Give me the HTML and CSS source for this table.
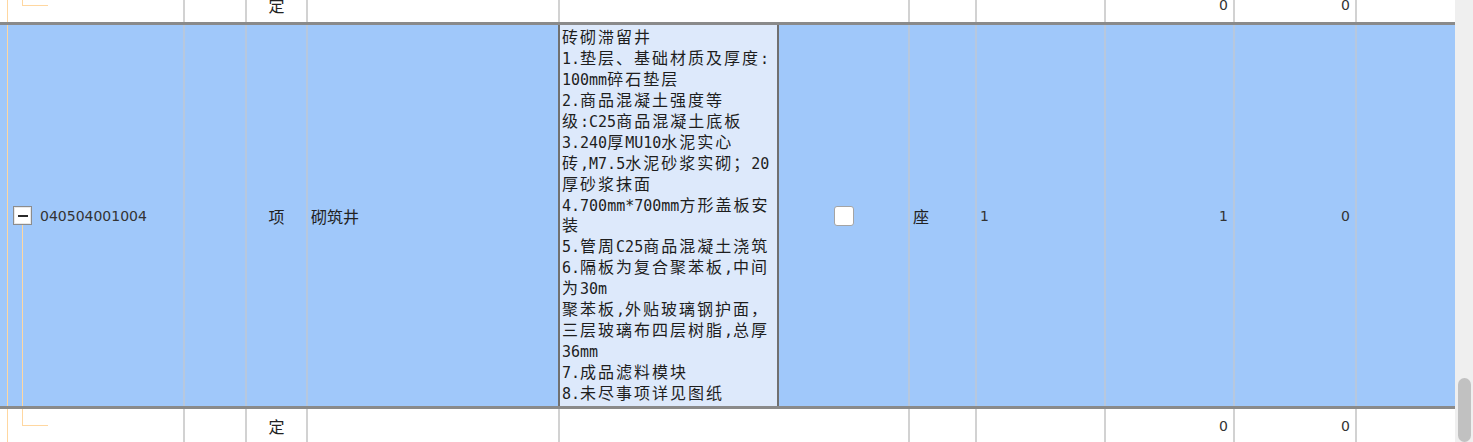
FILE: index.html
```html
<!DOCTYPE html>
<html lang="zh-CN">
<head>
<meta charset="utf-8">
<title>清单</title>
<link rel="stylesheet" href="styles.css">
</head>
<body>
<div class="page">
  <div class="table">
    <div class="rows">
      <div class="row row-white row-first">
        <div class="cell c-tree tree-end"></div>
        <div class="cell"></div>
        <div class="cell center cjk">定</div>
        <div class="cell"></div>
        <div class="cell"></div>
        <div class="cell no-left"></div>
        <div class="cell"></div>
        <div class="cell"></div>
        <div class="cell num">0</div>
        <div class="cell num">0</div>
        <div class="cell"></div>
      </div>

      <div class="row row-sel">
        <div class="cell c-tree tree-open">
          <span class="toggle"><span class="minus"></span></span>
          <span class="code">040504001004</span>
        </div>
        <div class="cell"></div>
        <div class="cell center cjk">项</div>
        <div class="cell cjk pad">砌筑井</div>
        <div class="cell editor">
          <div class="edit-text">
            <div class="ln">砖砌滞留井</div>
            <div class="ln"><span class="l">1.</span>垫层、基础材质及厚度<span class="l">:</span></div>
            <div class="ln"><span class="l">100mm</span>碎石垫层</div>
            <div class="ln"><span class="l">2.</span>商品混凝土强度等</div>
            <div class="ln">级<span class="l">:C25</span>商品混凝土底板</div>
            <div class="ln"><span class="l">3.240</span>厚<span class="l">MU10</span>水泥实心</div>
            <div class="ln">砖<span class="l">,M7.5</span>水泥砂浆实砌；<span class="l">20</span></div>
            <div class="ln">厚砂浆抹面</div>
            <div class="ln"><span class="l">4.700mm*700mm</span>方形盖板安</div>
            <div class="ln">装</div>
            <div class="ln"><span class="l">5.</span>管周<span class="l">C25</span>商品混凝土浇筑</div>
            <div class="ln"><span class="l">6.</span>隔板为复合聚苯板<span class="l">,</span>中间</div>
            <div class="ln">为<span class="l">30m</span></div>
            <div class="ln">聚苯板<span class="l">,</span>外贴玻璃钢护面，</div>
            <div class="ln">三层玻璃布四层树脂<span class="l">,</span>总厚</div>
            <div class="ln"><span class="l">36mm</span></div>
            <div class="ln"><span class="l">7.</span>成品滤料模块</div>
            <div class="ln"><span class="l">8.</span>未尽事项详见图纸</div>
          </div>
        </div>
        <div class="cell no-left center"><span class="checkbox"></span></div>
        <div class="cell cjk pad">座</div>
        <div class="cell pad-num">1</div>
        <div class="cell num">1</div>
        <div class="cell num">0</div>
        <div class="cell"></div>
      </div>

      <div class="row row-white row-last">
        <div class="cell c-tree tree-end-bottom"></div>
        <div class="cell"></div>
        <div class="cell center cjk">定</div>
        <div class="cell"></div>
        <div class="cell"></div>
        <div class="cell no-left"></div>
        <div class="cell"></div>
        <div class="cell"></div>
        <div class="cell num">0</div>
        <div class="cell num">0</div>
        <div class="cell"></div>
      </div>
    </div>
  </div>
  <div class="scrollbar"><div class="thumb"></div></div>
</div>
</body>
</html>
```

FILE: styles.css
```css
html, body {
  margin: 0;
  padding: 0;
  background: #ffffff;
}

.page {
  display: flex;
  width: 1473px;
  height: 442px;
  overflow: hidden;
}

.table {
  width: 1455px;
  height: 442px;
  overflow: hidden;
  background: #ffffff;
}

.rows {
  margin-top: -12px;
}

.row {
  display: grid;
  grid-template-columns: 183px 62px 61px 252px 221px 129px 67px 129px 129px 122px 100px;
  font-family: "DejaVu Sans", "Noto Sans CJK SC", sans-serif;
  font-size: 14px;
  color: #333333;
}

.row-first {
  height: 34px;
  border-bottom: 3px solid #8a8a8a;
}

.row-sel {
  height: 381px;
  background: #a0c8fa;
  border-bottom: 3px solid #8a8a8a;
}

.row-last {
  height: 34px;
}

.cell {
  box-sizing: border-box;
  min-width: 0;
  display: flex;
  align-items: center;
  border-left: 2px solid #d2d2d2;
  overflow: hidden;
  white-space: nowrap;
}

.row-sel .cell {
  border-left-color: #b7c8de;
}

.cell.no-left,
.row-sel .cell.no-left {
  border-left: none;
}

.cell.center {
  justify-content: center;
}

.cell.num {
  justify-content: flex-end;
  padding-right: 5px;
}

.cell.pad {
  padding-left: 3px;
}

.cell.pad-num {
  padding-left: 3px;
}

.cjk {
  font-family: "Noto Sans CJK SC", "DejaVu Sans", sans-serif;
  font-size: 16px;
  color: #222222;
}

/* tree column */
.c-tree,
.row-sel .c-tree {
  border-left: none;
  padding-left: 13px;
}

.tree-end {
  background:
    linear-gradient(#ffd7a0, #ffd7a0) 7px 0 / 1px 100% no-repeat,
    linear-gradient(#ffd7a0, #ffd7a0) 22px 0 / 1px 18px no-repeat,
    linear-gradient(#ffd7a0, #ffd7a0) 22px 17px / 26px 1px no-repeat;
}

.tree-open {
  background:
    linear-gradient(#ffd7a0, #ffd7a0) 7px 0 / 1px 100% no-repeat,
    linear-gradient(to bottom, transparent 50%, #ffd7a0 50%) 22px 0 / 1px 100% no-repeat;
}

.tree-end-bottom {
  background:
    linear-gradient(#ffd7a0, #ffd7a0) 7px 0 / 1px 100% no-repeat,
    linear-gradient(#ffd7a0, #ffd7a0) 22px 0 / 1px 17px no-repeat,
    linear-gradient(#ffd7a0, #ffd7a0) 22px 16px / 26px 1px no-repeat;
}

.toggle {
  box-sizing: border-box;
  width: 19px;
  height: 19px;
  flex: none;
  background: #ffffff;
  border: 1px solid #8c8c8c;
  box-shadow: inset 0 0 0 1px #e8e8e8;
  display: flex;
  align-items: center;
  justify-content: center;
}

.minus {
  width: 10px;
  height: 2px;
  background: #2a2a2a;
}

.code {
  margin-left: 8px;
  color: #333333;
  font-size: 14px;
}

/* editing cell */
.cell.editor,
.row-sel .cell.editor {
  border-left: 2px solid #707070;
  border-right: 2px solid #707070;
  background: #dde9fb;
  align-items: flex-start;
}

.row-white .cell.editor {
  border-left: 2px solid #d2d2d2;
  border-right: 2px solid #d2d2d2;
  background: transparent;
}

.edit-text {
  padding: 1px 0 0 2px;
  font-family: "Noto Sans CJK SC", "DejaVu Sans", sans-serif;
  font-size: 16px;
  letter-spacing: 2px;
  color: #1e1e1e;
}

.edit-text .ln {
  height: 20.95px;
  line-height: 20.95px;
  overflow: visible;
}

.edit-text .l {
  font-family: "DejaVu Sans Mono", "Liberation Mono", monospace;
  font-size: 15px;
  line-height: 1;
  letter-spacing: 0;
}

.checkbox {
  box-sizing: border-box;
  width: 20px;
  height: 20px;
  background: #ffffff;
  border: 1px solid #a4a4a4;
  border-radius: 3px;
}

/* scrollbar */
.scrollbar {
  width: 18px;
  height: 442px;
  background: #efefef;
  display: flex;
  flex-direction: column;
  align-items: center;
  padding-top: 378px;
  box-sizing: border-box;
}

.thumb {
  width: 13px;
  height: 80px;
  background: #c1c1c1;
  border-radius: 7px;
}
```
